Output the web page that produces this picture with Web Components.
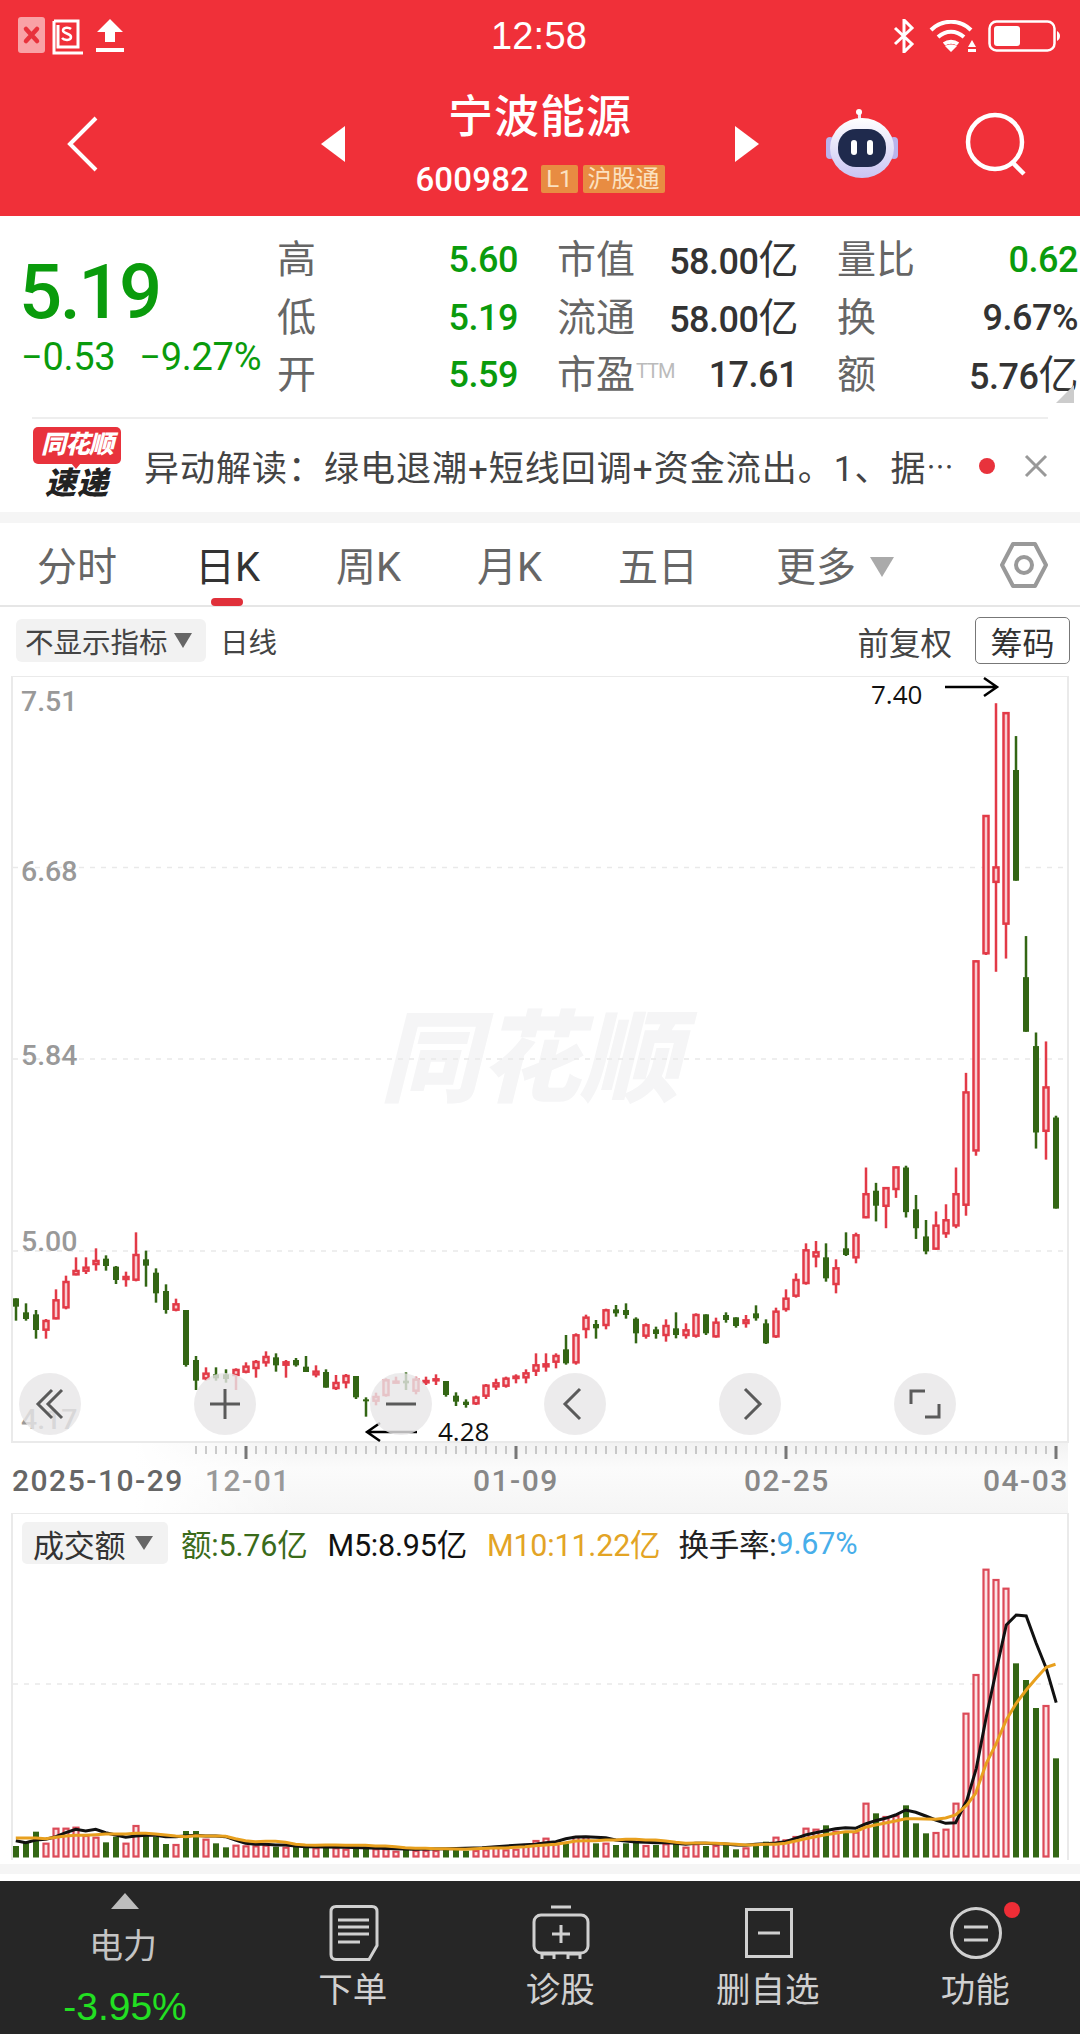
<!DOCTYPE html>
<html lang="zh"><head><meta charset="utf-8"><title>宁波能源</title>
<style>
html,body{margin:0;padding:0;background:#fff}
body{width:1080px;height:2034px;overflow:hidden;font-family:Roboto,"Noto Sans CJK SC",sans-serif}
</style></head><body>
<stock-header></stock-header>
<stock-stats></stock-stats>
<news-ticker></news-ticker>
<period-tabs></period-tabs>
<chart-toolbar></chart-toolbar>
<kline-chart></kline-chart>
<volume-chart></volume-chart>
<bottom-bar></bottom-bar>
<script>
const FONT='Roboto,"Noto Sans CJK SC",sans-serif';
function def(name,html,init){
  customElements.define(name,class extends HTMLElement{
    constructor(){super();const r=this.attachShadow({mode:'open'});r.innerHTML=typeof html==='function'?html(this):html;if(init)init(r,this);}
  });
}
def('stock-header',`<style>
:host{display:block;height:216px;background:#f03039;color:#fff;font-family:${FONT}}
.status{height:72px;display:flex;align-items:center;padding:0 20px 0 18px;position:relative}
.left,.right{display:flex;align-items:center;flex:1}
.right{justify-content:flex-end;gap:12px}
.time{font-size:38px;letter-spacing:.2px;line-height:74px;font-family:"Liberation Sans",sans-serif}
.nav{height:144px;display:grid;grid-template-columns:321px 24px 390px 24px 1fr;align-items:center;position:relative}
.back{padding-left:66px}
.mid{display:flex;flex-direction:column;align-items:center;height:144px}
.name{font-size:45px;line-height:60px;margin-top:16px;font-weight:500;letter-spacing:1px}
.code{display:flex;align-items:center;gap:5px;height:30px;margin-top:16px}
.code b{font-weight:500;font-size:33px;letter-spacing:.2px;margin-right:7px}
.tag{background:#e88c42;color:#fbe1c0;font-size:24px;line-height:28px;height:28px;padding:0 5px;border-radius:2px}
.tools{display:flex;align-items:center;padding-left:65px;gap:65px}
svg{display:block}
</style>
<div class="status"><div class="left">
<svg width="110" height="38" viewBox="0 0 110 38"><rect x="0" y="0" width="27" height="36" rx="3" fill="#f9a2a6"/><path d="M8 12l11 12M19 12L8 24" stroke="#e8323c" stroke-width="4.5" stroke-linecap="round"/><path d="M36 4h24v26H40V8M36 4v32h29" fill="none" stroke="#fff" stroke-width="3"/><path d="M53 12c-2-2-8-2-8 1.500s8 2.500 8 6.500-7 3.500-9 1" fill="none" stroke="#fff" stroke-width="2.500"/><path d="M92 2l13 13h-8v10h-10V15h-8zM78 31h28v4H78z" fill="#fff"/></svg>
</div><div class="time">12:58</div><div class="right">
<svg width="24" height="34" viewBox="0 0 24 34"><path d="M3 9l17 16-8 8V1l8 8L3 25" fill="none" stroke="#fff" stroke-width="3"/></svg>
<svg width="48" height="32" viewBox="0 0 48 32"><path d="M3 10C14-1 32-1 43 10M10 17c8-7 18-7 26 0M16 24c4-3 10-3 14 0" fill="none" stroke="#fff" stroke-width="4"/><path d="M23 32l-6-6c3-2 9-2 12 0zM44 20l4 7h-8zM40 29h8v3h-8z" fill="#fff"/></svg>
<svg width="72" height="32" viewBox="0 0 72 32"><rect x="1.500" y="1.500" width="65" height="29" rx="7" fill="none" stroke="#fff" stroke-width="2.500"/><rect x="6" y="6" width="26" height="20" rx="3" fill="#fff"/><path d="M69 11c2 1 3 3 3 5s-1 4-3 5z" fill="#fff"/></svg>
</div></div>
<div class="nav">
<div class="back"><svg width="34" height="56" viewBox="0 0 34 56"><path d="M30 2L4 28l26 26" fill="none" stroke="#fff" stroke-width="4"/></svg></div>
<svg width="24" height="36" viewBox="0 0 24 36"><path d="M24 0v36L0 18z" fill="#fff"/></svg>
<div class="mid"><div class="name">宁波能源</div><div class="code"><b>600982</b><span class="tag">L1</span><span class="tag">沪股通</span></div></div>
<svg width="24" height="36" viewBox="0 0 24 36"><path d="M0 0v36l24-18z" fill="#fff"/></svg>
<div class="tools">
<svg width="76" height="70" viewBox="0 0 76 70"><defs><linearGradient id="h" x1="0" y1="0" x2="0" y2="1"><stop offset="0" stop-color="#fff"/><stop offset="1" stop-color="#c9c4f3"/></linearGradient></defs><path d="M37 12c-3-3-1-8-1-9" fill="none" stroke="#efe9f7" stroke-width="3"/><circle cx="35" cy="3" r="3" fill="#fff"/><rect x="2" y="28" width="8" height="22" rx="4" fill="#b9b3ec"/><rect x="66" y="28" width="8" height="22" rx="4" fill="#b9b3ec"/><ellipse cx="38" cy="39" rx="32" ry="30" fill="url(#h)"/><rect x="14" y="20" width="48" height="38" rx="18" fill="#1f2a4d"/><rect x="27" y="31" width="6" height="15" rx="3" fill="#fff"/><rect x="43" y="31" width="6" height="15" rx="3" fill="#fff"/></svg>
<svg width="62" height="64" viewBox="0 0 62 64"><circle cx="30" cy="30" r="27" fill="none" stroke="#fff" stroke-width="4.500"/><path d="M47 50l12 12" stroke="#fff" stroke-width="4.500"/></svg>
</div></div>`);

def('stock-stats',`<style>
:host{display:flex;height:201px;font-family:${FONT};position:relative;background:#fff}
.price{width:277px;box-sizing:border-box;padding:34px 0 0 21px;color:#0a9b0c;flex:none}
.big{font-size:76px;line-height:84px;font-weight:500;letter-spacing:-2.500px;margin-left:-2px}
.chg{display:flex;gap:24px;font-size:38px;line-height:40px;margin-top:3px;letter-spacing:-.3px;white-space:nowrap}
.grid{display:grid;grid-template-columns:repeat(3,241px);column-gap:39px;grid-auto-rows:57.500px;padding-top:16px;font-size:39px;line-height:57px;color:#666}
.cell{display:flex;justify-content:space-between;white-space:nowrap}
.v{font-size:36px;color:#333;font-weight:500;letter-spacing:-.5px}
.u{font-size:40px;font-weight:400}
.g{color:#0a9b0c}
sup{font-size:20px;line-height:0;color:#bbb;vertical-align:10px;letter-spacing:-1px;margin-left:1px}
.corner{position:absolute;right:6px;bottom:14px;width:0;height:0;border-left:18px solid transparent;border-bottom:18px solid #ccc}
</style>
<div class="price"><div class="big">5.19</div><div class="chg"><span>−0.53</span><span>−9.27%</span></div></div>
<div class="grid">
<div class="cell"><span>高</span><span class="v g">5.60</span></div><div class="cell"><span>市值</span><span class="v">58.00<span class="u">亿</span></span></div><div class="cell"><span>量比</span><span class="v g">0.62</span></div>
<div class="cell"><span>低</span><span class="v g">5.19</span></div><div class="cell"><span>流通</span><span class="v">58.00<span class="u">亿</span></span></div><div class="cell"><span>换</span><span class="v">9.67%</span></div>
<div class="cell"><span>开</span><span class="v g">5.59</span></div><div class="cell"><span>市盈<sup>TTM</sup></span><span class="v">17.61</span></div><div class="cell"><span>额</span><span class="v">5.76<span class="u">亿</span></span></div>
</div><div class="corner"></div>`);

def('news-ticker',`<style>
:host{display:block;height:106px;box-sizing:border-box;font-family:${FONT};background:#fff;border-bottom:11px solid #f5f5f5}
.in{height:95px;box-sizing:border-box;margin:0 32px;border-top:2px solid #eee;display:flex;align-items:center;position:relative}
.logo{width:88px;height:78px;flex:none;position:relative;margin-left:1px;font-style:italic;font-weight:900;text-align:center}
.red{background:#e8323c;color:#fff;font-size:25px;line-height:36px;height:37px;border-radius:5px;letter-spacing:-1px}
.red:after{content:"";position:absolute;left:38px;top:36px;border:5px solid transparent;border-top:6px solid #e8323c}
.su{font-size:31px;line-height:36px;color:#222;margin-top:2px;letter-spacing:1px}
.t{font-size:35px;color:#444;margin-left:23px;white-space:nowrap;letter-spacing:1px;width:816px;display:flex;align-items:center}
.t i{font-style:normal;font-size:27px;letter-spacing:0}
.dot{width:16px;height:16px;border-radius:50%;background:#e8323c;margin-left:22px;flex:none}
svg{margin-left:29px;flex:none}
</style><div class="in"><div class="logo"><div class="red">同花顺</div><div class="su">速递</div></div>
<div class="t"><span>异动解读：绿电退潮+短线回调+资金流出。1、据</span><i>⋯</i></div><div class="dot"></div>
<svg width="24" height="24" viewBox="0 0 24 24"><path d="M2 2l20 20M22 2L2 22" stroke="#999" stroke-width="3"/></svg></div>`);

def('period-tabs',`<style>
:host{display:flex;height:84px;box-sizing:border-box;border-bottom:2px solid #e6e6e6;font-family:${FONT};position:relative;font-size:40px;color:#666;background:#fff}
span{position:absolute;top:18px;line-height:54px;white-space:nowrap}
.on{color:#333}
.bar{position:absolute;left:211px;top:75px;width:32px;height:8px;background:#e0303a;border-radius:4px}
.tri{position:absolute;left:870px;top:34px;border:12px solid transparent;border-top:20px solid #aaa;border-bottom:0}
svg{position:absolute;left:1000px;top:19px}
</style>
<span style="left:37px">分时</span><span class="on" style="left:195px">日K</span><span style="left:336px">周K</span><span style="left:477px">月K</span><span style="left:618px">五日</span><span style="left:776px">更多</span>
<div class="tri"></div><div class="bar"></div>
<svg width="48" height="46" viewBox="0 0 48 46"><path d="M13 2h22l11 21-11 21H13L2 23z" fill="none" stroke="#999" stroke-width="4" stroke-linejoin="round"/><circle cx="24" cy="23" r="8" fill="none" stroke="#999" stroke-width="4"/></svg>`);

def('chart-toolbar',`<style>
:host{display:flex;align-items:center;height:69px;box-sizing:border-box;padding:0 10px 2px 16px;font-family:${FONT};font-size:28.500px;color:#444;background:#fff}
.chip{background:#f2f2f2;border-radius:6px;height:43px;width:190px;box-sizing:border-box;padding-left:9px;display:flex;align-items:center;white-space:nowrap;flex:none}
i{display:block;border:9px solid transparent;border-top:15px solid #666;border-bottom:0;margin-left:6px}
.d{margin-left:14px;flex:1}
.f{font-size:31.500px;margin-right:23px}
.b{width:95px;height:47px;box-sizing:border-box;border:1.500px solid #777;border-radius:5px;display:flex;align-items:center;justify-content:center;font-size:32px;color:#333}
</style><div class="chip">不显示指标<i></i></div><div class="d">日线</div><div class="f">前复权</div><div class="b">筹码</div>`);

def('round-btn',`<style>
:host{position:absolute;width:62px;height:62px;border-radius:50%;background:rgba(231,230,231,.8);display:flex;align-items:center;justify-content:center}
</style><slot></slot>`);

const A=[
['g',235,235,260,302],['g',250,277,297,302],['g',270,283,330,356],['r',297,300,332,356],['r',208,238,298,298],['r',167,183,265,268],['r',112,150,166,166],['r',112,140,155,162],['r',85,120,135,152],['g',106,116,138,152],
['g',138,140,180,192],['r',155,168,180,200],['r',37,102,182,184],['g',92,118,137,200],['g',145,158,220,248],['g',193,213,270,281],['r',236,250,272,274],['g',270,270,435,440],['g',408,420,482,510],['r',442,458,478,482],
['g',442,463,475,482],['g',448,463,477,488],['r',445,447,468,510],['r',427,437,458,460],['r',420,423,447,473],['r',394,408,430,440],['g',400,412,436,455],['r',420,424,437,473],['g',414,420,436,440],['g',408,440,456,456],
['r',436,452,466,472],['g',448,456,503,503],['r',465,486,507,510],['r',462,465,490,505],['g',468,468,532,537],['g',532,538,542,590],['r',518,528,545,556],['r',475,478,528,530],['r',470,482,490,490],['g',457,482,490,510],
['r',470,476,515,523],['r',470,480,490,495],['r',463,475,480,495],['g',483,483,525,530],['g',517,527,545,558],['g',538,545,555,563],['r',527,530,553,555],['r',492,494,530,537],['r',476,487,502,510],['r',470,473,500,503],
['r',463,467,477,490],['r',448,457,475,490],['r',400,433,455,468],
['r',400,430,442,455],['r',400,405,428,445],['g',345,388,430,434],['r',340,343,430,434],['r',284,290,330,355],['g',300,312,325,356],['r',266,268,318,328],['g',255,268,280,290],['g',250,270,285,296],['g',292,296,340,370],['r',310,313,350,356],
['g',320,328,342,356],['r',298,315,348,365],['g',277,325,345,355],['r',310,328,348,356],['r',280,282,350,353],['g',283,283,340,345],['r',293,305,352,353],['g',277,285,300,308],['g',292,292,318,323],['r',285,298,312,323],
['g',256,280,295,302],['g',298,310,370,372],['r',263,272,352,354],['r',208,233,270,275],['r',160,177,230,233],['r',70,88,192,194],['r',63,94,112,142],['g',70,112,175,185],['r',118,142,195,220],['g',37,85,105,108],['r',38,43,115,130]];
const B=[['r',1365,1437,1507,1507],['g',1408,1430,1472,1516],['r',1420,1420,1475,1535],['r',1362,1362,1428,1450],['g',1360,1365,1490,1505],['g',1442,1482,1535,1565],['g',1512,1558,1600,1608],['r',1488,1525,1595,1595],['r',1468,1510,1552,1562],['r',1365,1437,1530,1535],
['r',1100,1152,1472,1500],['r',785,785,1320,1332],['r',378,378,768,770],['r',65,522,568,817],['r',90,90,685,780],['g',157,252,562,562],['g',717,832,985,985],['g',987,1025,1267,1312],['r',1012,1138,1265,1343],['g',1220,1225,1480,1480]];
const GREEN='#336614';
function candles(){
  const c=[...A.map(a=>[a[0],...a.slice(1).map(z=>1220+z/3)]),...B.map(a=>[a[0],...a.slice(1).map(z=>680+z/2.8)])];
  return c.map((d,i)=>{
    const x=16+10*i,[k,h,t,b,l]=d,col=k==='r'?'#e23a47':GREEN;
    let s=`<rect x="${x-1.25}" y="${h}" width="2.500" height="${l-h}" fill="${col}"/>`;
    if(k==='r'){const H=Math.max(b-t-2,1);s+=`<rect x="${x-2.500}" y="${t+1}" width="5" height="${H}" fill="#f8cdd1" stroke="${col}" stroke-width="2.500"/>`;}
    else s+=`<rect x="${x-3}" y="${t}" width="6" height="${Math.max(b-t,2)}" fill="${col}"/>`;
    return s;
  }).join('');
}
def('kline-chart',(()=>{
  let ticks='';
  for(let x=196;x<=1056;x+=10){const big=(x-246)%270===0;ticks+=`<rect x="${big?x-1.500:x-.5}" y="1446" width="${big?3:1}" height="${big?13:8}" fill="${big?'#777':'#999'}"/>`;}
  const grid=[867.500,1059,1251].map(y=>`<line x1="13" x2="1067" y1="${y}" y2="${y}" stroke="#e9e9e9" stroke-width="1.500" stroke-dasharray="5 6"/>`).join('');
  const yl=[['7.51',711],['6.68',881],['5.84',1065],['5.00',1251],['4.17',1429]].map(a=>`<text x="21" y="${a[1]}" font-size="28.500" fill="#999" font-weight="500">${a[0]}</text>`).join('');
  const xl=[['2025-10-29',12,'#666'],['12-01',205,'#999'],['01-09',473,'#888'],['02-25',744,'#888'],['04-03',983,'#888']].map(a=>`<text x="${a[1]}" y="1491" font-size="30" fill="${a[2]}" font-weight="500" letter-spacing="1.500">${a[0]}</text>`).join('');
  const pos=[50,225,401,575,750,925].map(x=>`left:${x-31}px;top:697px`);
  const ic=(d)=>`<svg width="40" height="40" viewBox="0 0 40 40"><path d="${d}" fill="none" stroke="#5a5a5a" stroke-width="3"/></svg>`;
  return `<style>
:host{display:block;height:837px;position:relative;font-family:${FONT};background:#fff}
svg.m{display:block;position:absolute;left:0;top:0}
</style>
<svg class="m" width="1080" height="837" viewBox="0 676 1080 837">
<defs><linearGradient id="ax" x1="0" y1="0" x2="0" y2="1"><stop offset="0" stop-color="#f2f2f2"/><stop offset=".35" stop-color="#fbfbfb"/><stop offset="1" stop-color="#f5f5f5"/></linearGradient>
<linearGradient id="fd" x1="0" y1="0" x2="1" y2="0"><stop offset="0" stop-color="#fff"/><stop offset=".45" stop-color="#fff"/><stop offset="1" stop-color="#fff" stop-opacity="0"/></linearGradient></defs>
<rect x="0" y="1443" width="1068" height="70" fill="url(#ax)"/><rect x="0" y="1443" width="300" height="70" fill="url(#fd)"/>
<text x="380" y="1094" font-size="100" font-weight="900" font-style="italic" fill="#f5f5f6" font-family='"Noto Sans CJK SC",sans-serif'>同花顺</text>
<rect x="12" y="676" width="1056" height="766" fill="none" stroke="#eaeaea" stroke-width="2"/>
${grid}${yl}${candles()}${ticks}${xl}
<text x="871" y="704" font-size="26" fill="#111" font-family='"Open Sans",sans-serif'>7.40</text>
<path d="M945 687h51M984 678l13 9-13 9" fill="none" stroke="#000" stroke-width="2.500"/>
<text x="438" y="1441" font-size="26" fill="#111" font-family='"Open Sans",sans-serif'>4.28</text>
<path d="M417 1432h-50M380 1423l-13 9 13 9" fill="none" stroke="#000" stroke-width="2.500"/>
</svg>
<round-btn style="${pos[0]}">${ic('M22 6L8 20l14 14M32 6L18 20l14 14')}</round-btn>
<round-btn style="${pos[1]}">${ic('M20 5v30M5 20h30')}</round-btn>
<round-btn style="${pos[2]}">${ic('M5 20h30')}</round-btn>
<round-btn style="${pos[3]}">${ic('M25 5L10 20l15 15')}</round-btn>
<round-btn style="${pos[4]}">${ic('M15 5l15 15-15 15')}</round-btn>
<round-btn style="${pos[5]}">${ic('M6 20V7h14M34 20v13H20')}</round-btn>`;
})());

const VA=[['g',858],['g',848],['g',815],['r',848],['r',803],['r',803],['r',800],['r',825],['r',830],['g',847],['g',830],['r',848],['r',795],['g',825],['g',830],['g',852],['r',852],['g',813],['g',813],['r',836],['g',850],['g',862],['r',854],['r',856],['r',856],['r',854],['g',860],['r',860],['g',858],['g',860],['r',862],['g',858],['r',862],['r',866],['g',860],['g',860],['r',865],['r',865],['r',872],['g',868],['r',870],['r',870],['r',870],['g',868],['g',870],['g',872],['r',870],['r',868],['r',858],['r',868],['r',866],['r',852],['r',840],
['r',833],['r',850],['g',850],['r',828],['r',828],['g',850],['r',848],['g',855],['g',850],['g',848],['r',855],['g',855],['r',850],['g',848],['r',860],['r',850],['g',858],['r',855],['g',855],['g',868],['r',862],['g',850],['g',845],['r',830],['r',838],['r',828],['r',803],['r',806],['g',796],['r',812],['g',818],['r',815],['r',728],['g',760],['r',768],['r',765],['g',736],['g',790],['g',820],['r',816],['r',806],['r',728],['r',458],['r',342],['r',26],['r',57],['r',83],['g',310],['g',360],['g',444],['r',435],['g',595]];
const K1=[[46,842],[75,848],[104,840],[133,838],[162,830],[191,818],[220,808],[249,813],[278,808],[307,818],[336,825],[365,832],[394,828],[423,826],[452,826],[481,830],[510,830],[539,828],[568,826],[597,828],[626,828],[655,830],[684,840],[713,850],[742,853],[771,853],[800,855],[829,855],[858,858],[887,860],[1000,862],[1200,868],[1300,866],[1400,863],[1440,860],[1525,854],[1554,853]];
const K2=[[17,848],[46,845],[75,836],[104,831],[133,830],[162,832],[191,833],[220,840],[249,843],[278,846],[307,847],[336,848],[365,848],[394,850],[423,853],[452,850],[481,850],[510,851],[539,852],[568,855],[597,856],[626,853],[655,851],[684,849],[713,845],[742,835],[771,825],[800,818],[829,812],[858,806],[887,803],[916,805],[945,792],[974,782],[1003,775],[1032,765],[1062,750],[1091,757],[1120,768],[1149,780],[1178,790],[1207,788],[1240,720],[1267,625],[1296,470],[1325,330],[1354,195],[1383,165],[1412,168],[1441,250],[1470,325],[1499,428]];
const O1=[[46,834],[75,834],[104,834],[133,836],[162,832],[191,828],[220,826],[249,826],[278,824],[307,822],[336,822],[365,822],[394,820],[423,820],[452,822],[481,825],[510,828],[539,830],[568,827],[597,828],[626,828],[655,829],[684,836],[713,842],[742,845],[771,844],[800,844],[829,847],[858,853],[887,855],[916,856],[945,855],[974,855],[1003,856],[1032,856],[1061,856],[1090,858],[1119,858],[1148,860],[1177,863],[1206,865],[1235,865],[1264,866],[1293,866],[1322,867],[1351,868],[1380,866],[1409,865],[1438,864],[1467,864],[1496,862],[1525,860],[1554,857]];
const O2=[[17,855],[46,853],[75,848],[104,843],[133,842],[162,842],[191,840],[220,840],[249,838],[278,838],[307,840],[336,840],[365,843],[394,847],[423,850],[452,849],[481,849],[510,850],[539,851],[568,853],[597,855],[626,854],[655,853],[684,853],[713,850],[742,843],[771,836],[800,830],[829,824],[858,820],[887,815],[916,815],[945,802],[974,795],[1003,789],[1032,783],[1062,776],[1091,776],[1120,777],[1149,778],[1178,774],[1207,765],[1240,735],[1265,700],[1296,610],[1325,550],[1354,480],[1383,430],[1412,390],[1441,355],[1470,322],[1497,313]];
const pts=(a,b)=>[...a.map(p=>[p[0]/2.904,1560+p[1]/3]),...b.map(p=>[540+p[0]/2.904,1560+p[1]/3])].map(p=>p[0].toFixed(1)+','+p[1].toFixed(1)).join(' ');
def('volume-chart',(()=>{
  const bars=VA.map((d,i)=>{const x=16+10*i,t=1560+d[1]/3,bot=1857.5;
    return d[0]==='g'?`<rect x="${x-3}" y="${t}" width="6" height="${bot-t}" fill="${GREEN}"/>`:`<rect x="${x-2.500}" y="${t+1}" width="5" height="${bot-t-2}" fill="#fbe4e6" stroke="#dc4a58" stroke-width="2.200"/>`;}).join('');
  return `<style>
:host{display:block;height:368px;position:relative;font-family:${FONT};background:#fff}
svg{display:block;position:absolute;left:0;top:0}
.head{position:relative;display:flex;align-items:center;height:42px;padding:9px 0 0 22px;font-size:30.500px;white-space:nowrap;letter-spacing:-.2px}
.chip{width:146px;height:42px;box-sizing:border-box;padding-left:11px;background:#f2f2f2;border-radius:5px;display:flex;align-items:center;color:#333;font-size:31px;flex:none;margin-right:13px}
.chip i{display:block;border:9px solid transparent;border-top:14px solid #666;border-bottom:0;margin-left:10px}
.band{position:absolute;left:0;right:0;top:351px;height:10px;background:#f5f5f5}
</style>
<svg width="1080" height="368" viewBox="0 1513 1080 368">
<path d="M12 1860V1513H1068V1860" fill="none" stroke="#eaeaea" stroke-width="2"/>
<line x1="13" x2="1067" y1="1684" y2="1684" stroke="#e9e9e9" stroke-width="1.500" stroke-dasharray="5 6"/>
${bars}
<polyline points="${pts(K1,K2)}" fill="none" stroke="#111" stroke-width="3"/>
<polyline points="${pts(O1,O2)}" fill="none" stroke="#e8a01e" stroke-width="3"/>
</svg>
<div class="head"><div class="chip">成交额<i></i></div>
<span style="color:#3a6b1a;margin-right:20px">额:5.76亿</span><span style="color:#111;margin-right:20px">M5:8.95亿</span><span style="color:#e3a425;margin-right:18px">M10:11.22亿</span><span style="color:#222">换手率:</span><span style="color:#47aeea">9.67%</span></div>
<div class="band"></div>`;
})());

def('bar-item',el=>`<style>
:host{display:flex;flex-direction:column;align-items:center;position:relative;color:#d0d0d0;padding-top:24px}
.ic{height:56px;display:flex;align-items:center;justify-content:center}
.lb{font-size:34.500px;line-height:46px;margin-top:6px;margin-left:-2px;white-space:nowrap}
</style><div class="ic"><slot></slot></div><div class="lb">${el.getAttribute('label')}</div>`);
def('bottom-bar',`<style>
:host{display:grid;grid-template-columns:250px repeat(4,207.500px);height:153px;background:#262626;font-family:${FONT};position:relative;overflow:hidden}
.sec{display:flex;flex-direction:column;align-items:center;color:#c4c4c4}
.up{border:14px solid transparent;border-bottom:16px solid #bdbdbd;border-top:0;margin-top:12px}
.n{font-size:34px;line-height:44px;margin-top:15px;margin-left:-4px}
.p{font-size:39px;line-height:44px;color:#22e022;margin-top:17px;font-family:"Liberation Sans",sans-serif}
.dot{position:absolute;left:1004px;top:21px;width:16px;height:16px;border-radius:50%;background:#ee2d36}
svg{display:block;fill:none;stroke:#d0d0d0;stroke-width:3}
</style>
<div class="sec"><div class="up"></div><div class="n">电力</div><div class="p">-3.95%</div></div>
<bar-item label="下单"><svg width="50" height="56" viewBox="0 0 50 56"><path d="M7 1.500h36q5 0 5 5v34l-8 14H7q-5 0-5-5v-43q0-5 5-5z"/><path d="M9 15h31M9 22h31M9 29h31M9 37h22"/></svg></bar-item>
<bar-item label="诊股"><svg width="58" height="56" viewBox="0 0 58 56"><path d="M19 2h20"/><rect x="2" y="10" width="54" height="38" rx="7"/><path d="M29 20v18M20 29h18"/><path d="M10 54v-5h12v5M36 54v-5h12v5" stroke-width="3"/></svg></bar-item>
<bar-item label="删自选"><svg width="48" height="50" viewBox="0 0 48 50"><rect x="1.500" y="1.500" width="45" height="47"/><path d="M13 25h22"/></svg></bar-item>
<bar-item label="功能"><svg width="52" height="52" viewBox="0 0 52 52"><circle cx="26" cy="26" r="24.500"/><path d="M14 20h24M14 33h24"/></svg></bar-item>
<div class="dot"></div>`);
</script></body></html>
